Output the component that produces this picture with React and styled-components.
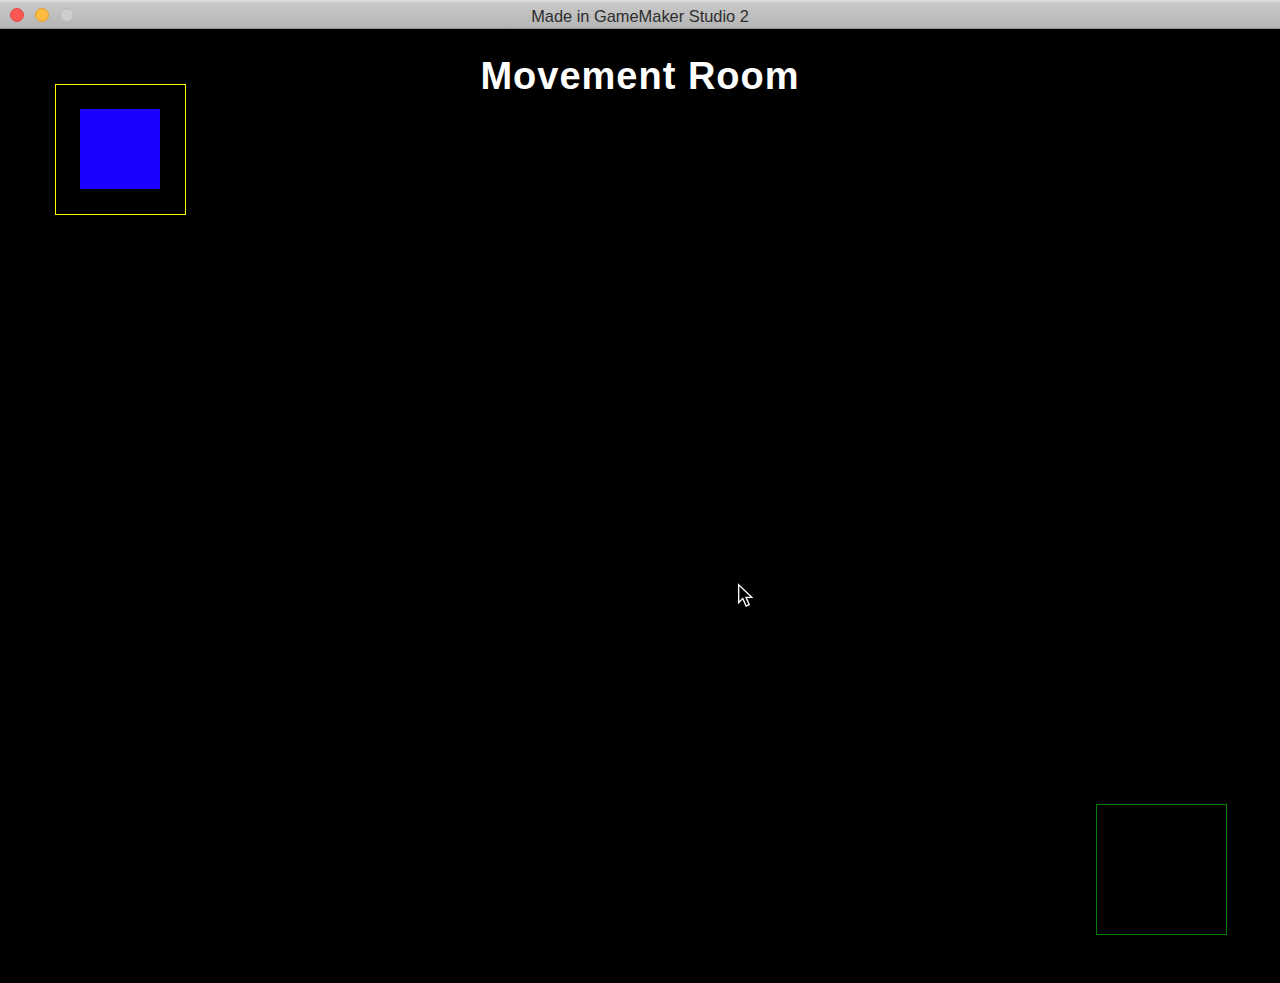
import React from 'react'
import styled, { createGlobalStyle } from 'styled-components'

const GlobalStyle = createGlobalStyle`
  html, body {
    margin: 0;
    padding: 0;
    background: #000;
    overflow: hidden;
  }
  #root {
    height: 983px;
  }
`

const Window = styled.div`
  width: 1280px;
  height: 983px;
  display: flex;
  flex-direction: column;
  background: #000;
`

const TitleBar = styled.div`
  position: relative;
  height: 28px;
  flex-shrink: 0;
  display: flex;
  align-items: center;
  justify-content: center;
  background: linear-gradient(#cbcbcb, #b5b5b5);
  box-shadow: inset 0 2px 0 #dcdcdc;
  border-bottom: 1px solid #8e8e8e;
`

const Lights = styled.div`
  position: absolute;
  left: 10px;
  top: 8px;
  display: flex;
  gap: 11px;
`

const Light = styled.span`
  width: 14px;
  height: 14px;
  border-radius: 50%;
  box-sizing: border-box;
  background: ${p => p.color};
  border: 1px solid ${p => p.edge};
`

const WindowTitle = styled.span`
  font-family: 'Liberation Sans', Arial, sans-serif;
  font-size: 16.4px;
  color: #2e2e2e;
  margin-top: 4px;
`

const Room = styled.div`
  position: relative;
  flex: 1;
  background: #000;
`

const RoomName = styled.h1`
  margin: 0;
  padding-top: 26px;
  text-align: center;
  font-family: 'Liberation Sans', Arial, sans-serif;
  font-weight: bold;
  font-size: 38px;
  line-height: 42px;
  letter-spacing: 1px;
  color: #fff;
`

const Frame = styled.div`
  position: absolute;
  left: ${p => p.x}px;
  top: ${p => p.y}px;
  width: 131px;
  height: 131px;
  box-sizing: border-box;
  border: 1px solid ${p => p.color};
`

const Player = styled.div`
  position: absolute;
  left: 80px;
  top: 80px;
  width: 80px;
  height: 80px;
  background: #1a00ff;
`

const Pointer = styled.svg`
  position: absolute;
  left: 737px;
  top: 554px;
`

export default function App() {
  return (
    <>
      <GlobalStyle />
      <Window>
        <TitleBar>
          <Lights>
            <Light color="#fc5753" edge="#df4744" />
            <Light color="#fdbc40" edge="#de9f34" />
            <Light color="#cdcdcd" edge="#b8b8b8" />
          </Lights>
          <WindowTitle>Made in GameMaker Studio 2</WindowTitle>
        </TitleBar>
        <Room>
          <RoomName>Movement Room</RoomName>
          <Frame x={55} y={55} color="#ffff00" />
          <Player />
          <Frame x={1096} y={775} color="#008000" />
          <Pointer width="20" height="27" viewBox="0 0 18 24">
            <path
              d="M1.5 1.5 L1.5 17.5 L5.2 13.8 L8.2 20.6 L11 19.4 L8.1 12.8 L13.3 12.8 Z"
              fill="#000"
              stroke="#fff"
              strokeWidth="1.2"
              strokeLinejoin="miter"
            />
          </Pointer>
        </Room>
      </Window>
    </>
  )
}
